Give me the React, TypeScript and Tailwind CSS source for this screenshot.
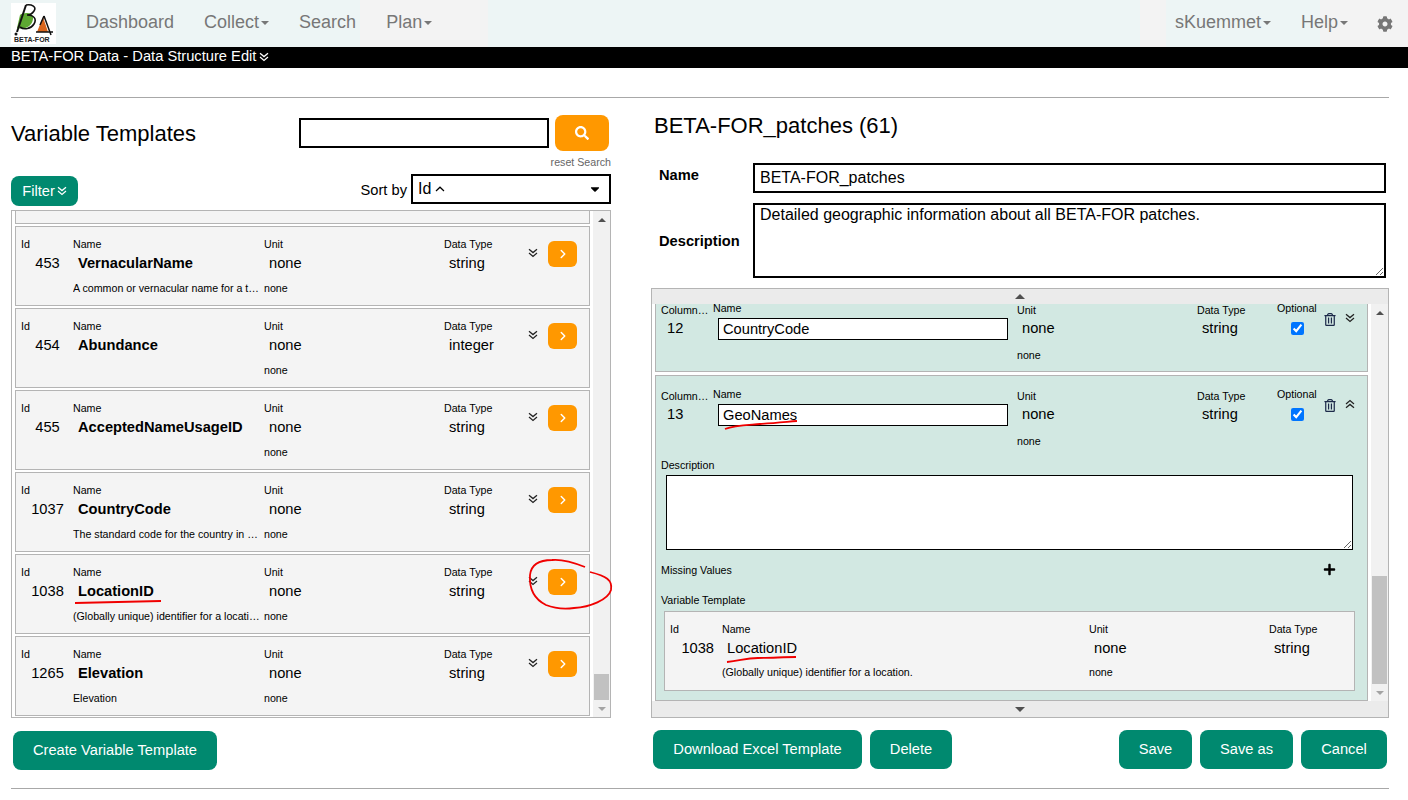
import type { ReactNode } from "react";
import { ChevronRight } from "lucide-react";
import { FaCaretDown, FaCog, FaPlus, FaRegTrashAlt, FaSearch } from "react-icons/fa";

const templates = [
  { id: 453, name: "VernacularName", type: "string", desc: "A common or vernacular name for a taxon." },
  { id: 454, name: "Abundance", type: "integer", desc: "" },
  { id: 455, name: "AcceptedNameUsageID", type: "string", desc: "" },
  { id: 1037, name: "CountryCode", type: "string", desc: "The standard code for the country in which the location is." },
  { id: 1038, name: "LocationID", type: "string", desc: "(Globally unique) identifier for a location." },
  { id: 1265, name: "Elevation", type: "string", desc: "Elevation" },
];

// thin double chevron, the icon font version in the app renders lighter than the FA one
function Chevrons({ up, className = "" }: { up?: boolean; className?: string }) {
  return (
    <svg viewBox="0 0 10 10" className={`h-[10px] w-[10px] ${up ? "rotate-180" : ""} ${className}`} fill="none" stroke="currentColor" strokeWidth="1.25">
      <polyline points="1,1.2 5,4.6 9,1.2" />
      <polyline points="1,5 5,8.4 9,5" />
    </svg>
  );
}

function Caret() {
  return <span className="ml-[2px] inline-block border-x-[4px] border-t-[4px] border-x-transparent border-t-[#777] align-middle" />;
}

function NavLink({ children, caret }: { children: ReactNode; caret?: boolean }) {
  return (
    <a className="flex items-center px-[15px] pb-[2px] text-[18px] text-[#777]">
      {children}
      {caret && <Caret />}
    </a>
  );
}

function Logo() {
  return (
    <div className="h-[41px] w-[45px] bg-white">
      <svg viewBox="0 0 45 41" className="h-full w-full">
        <path d="M9 12 C13 9 23 9 22 16 C21 24 13 27 6 25 Z" fill="#5da832" />
        <path d="M15 2 L6 29" stroke="#111" strokeWidth="2" fill="none" />
        <path d="M15 2 C21 1 26 4 23 8 C21 11 18 12 16 12 C23 12 26 16 23 21 C20 26 13 27 9 24" stroke="#111" strokeWidth="1.6" fill="none" />
        <circle cx="5" cy="31" r="1.5" fill="#111" />
        <path d="M32 14 L26 29 L37 29 Z" fill="#d9651c" />
        <path d="M33 13 L40 32 M25 29 L42 29 M33 13 L29 22" stroke="#111" strokeWidth="1.5" fill="none" />
        <text x="3" y="38.5" fontSize="7" fontWeight="700" fill="#222" fontFamily="Liberation Sans, sans-serif">BETA-FOR</text>
      </svg>
    </div>
  );
}

function GreenButton({ children, className }: { children: ReactNode; className: string }) {
  return (
    <button className={`flex h-[39px] items-center justify-center rounded-[8px] bg-[#00896f] pb-[2px] text-[14.67px] text-white ${className}`}>
      {children}
    </button>
  );
}

function Scrollbar({ thumb }: { thumb: string }) {
  return (
    <div className="flex w-[17px] shrink-0 flex-col bg-[#f1f1f1]">
      <div className="flex h-[17px] items-center justify-center">
        <span className="border-x-[4px] border-b-[4px] border-x-transparent border-b-[#505050]" />
      </div>
      <div className="flex flex-1 flex-col items-center justify-end">
        <div className={`w-[15px] bg-[#c1c1c1] ${thumb}`} />
      </div>
      <div className="flex h-[17px] items-center justify-center">
        <span className="border-x-[4px] border-t-[4px] border-x-transparent border-t-[#a3a3a3]" />
      </div>
    </div>
  );
}

function Label({ children, className = "" }: { children: ReactNode; className?: string }) {
  return <div className={`flex h-[14px] items-center text-[10.67px] whitespace-nowrap ${className}`}>{children}</div>;
}

function TemplateRow({ t }: { t: (typeof templates)[number] }) {
  return (
    <div className="grid h-[80px] shrink-0 grid-cols-[52px_191px_180px_84px_20px_29px] grid-rows-[14px_24px_26px] border border-[#b4b4b4] bg-[#f4f4f4] pt-[10px] pl-[5px] text-black">
      <Label>Id</Label>
      <Label>Name</Label>
      <Label>Unit</Label>
      <Label>Data Type</Label>
      <div className="row-span-2 flex items-center pb-[6px]">
        <Chevrons className="text-[#222]" />
      </div>
      <div className="row-span-2 pt-[4px]">
        <button className="flex h-[26px] w-[29px] items-center justify-center rounded-[6px] bg-[#ff9800] text-white">
          <ChevronRight size={14} strokeWidth={2.5} />
        </button>
      </div>
      <div className="flex items-center justify-center pl-[1px] text-[14.67px] leading-none">{t.id}</div>
      <div className="flex items-center pl-[5px] text-[14.67px] font-bold">{t.name}</div>
      <div className="flex items-center pl-[5px] text-[14.67px]">none</div>
      <div className="flex items-center pl-[5px] text-[14.67px]">{t.type}</div>
      <div />
      <div className="col-start-2 flex items-center pr-[4px]">
        <span className="truncate text-[10.67px]">{t.desc}</span>
      </div>
      <div className="flex items-center text-[10.67px]">none</div>
    </div>
  );
}

function ColumnHeader({ no, name, open }: { no: number; name: string; open?: boolean }) {
  return (
    <div className="grid h-[80px] grid-cols-[52px_304px_180px_80px_47px_21px_20px] grid-rows-[14px_22px_31px] pt-[13px] pl-[5px]">
      <Label className="pr-[3px]">
        <span className="truncate">Column Index</span>
      </Label>
      <Label className="-mt-[2px]">Name</Label>
      <Label>Unit</Label>
      <Label>Data Type</Label>
      <Label className="-mt-[2px]">Optional</Label>
      <div className="row-span-2 pt-[10px]">
        <FaRegTrashAlt className="h-[13px] w-[12px] text-[#1d2a4a]" />
      </div>
      <div className="row-span-2 pt-[10px]">
        <Chevrons up={open} className="text-[#222]" />
      </div>
      <div className="flex items-center pl-[6px] text-[14.67px]">{no}</div>
      <div className="pl-[5px]">
        <input
          readOnly
          value={name}
          className="h-[22px] w-[290px] border border-black bg-white px-[4px] text-[14.67px] text-black outline-none"
        />
      </div>
      <div className="flex items-center pl-[5px] text-[14.67px]">none</div>
      <div className="flex items-center pl-[5px] text-[14.67px]">string</div>
      <div className="flex items-center pl-[14px]">
        <input type="checkbox" readOnly checked className="h-[13px] w-[13px] accent-[#0075ff]" />
      </div>
      <div className="col-start-3 col-end-4 flex items-center text-[10.67px]">none</div>
    </div>
  );
}

export default function App() {
  return (
    <div className="relative w-[1408px] font-['Liberation_Sans',Arial,sans-serif] text-black">
      <nav className="flex h-[47px] items-center bg-[linear-gradient(90deg,#edf5f5_360px,#f3f3f3_360px,#f3f3f3_488px,#edf5f5_488px,#edf5f5_1140px,#f3f3f3_1140px,#f3f3f3_1166px,#edf5f5_1166px,#edf5f5_1320px,#f3f3f3_1320px)] pr-[15px] pl-[11px]">
        <div className="mr-[15px]">
          <Logo />
        </div>
        <NavLink>Dashboard</NavLink>
        <NavLink caret>Collect</NavLink>
        <NavLink>Search</NavLink>
        <NavLink caret>Plan</NavLink>
        <div className="ml-auto flex items-center">
          <NavLink caret>sKuemmet</NavLink>
          <NavLink caret>Help</NavLink>
          <FaCog className="ml-[14px] h-[16px] w-[16px] text-[#777]" />
        </div>
      </nav>
      <div className="flex h-[21px] items-center bg-black pb-[2px] pl-[11px] text-[14.7px] text-white">
        BETA-FOR Data - Data Structure Edit
        <Chevrons className="ml-[3px]" />
      </div>

      <main className="pt-[29px] pr-[19px] pl-[11px]">
        <hr className="border-[#a8a8a8]" />
        <div className="flex gap-[40px]">
          <section className="w-[600px]">
            <div className="mt-[17px] flex h-[36px] items-center pr-[2px]">
              <h2 className="pt-[1px] text-[22px]">Variable Templates</h2>
              <input className="ml-auto h-[30px] w-[250px] border-2 border-black bg-white outline-none" />
              <button className="ml-[6px] flex h-[36px] w-[54px] items-center justify-center rounded-[8px] bg-[#ff9800] text-white">
                <FaSearch className="h-[14px] w-[14px]" />
              </button>
            </div>
            <div className="mt-[4px] flex h-[14px] items-center justify-end text-[10.67px] text-[#666]">reset Search</div>
            <div className="mt-[5px] flex items-start justify-between">
              <button className="mt-[2px] flex h-[30px] w-[67px] items-center justify-center rounded-[8px] bg-[#00896f] text-[14.67px] text-white">
                Filter
                <Chevrons className="ml-[2px]" />
              </button>
              <div className="flex items-center">
                <span className="mr-[4px] pt-[1px] text-[14.67px]">Sort by</span>
                <div className="flex h-[30px] w-[200px] items-center border-2 border-black pr-[7px] pl-[5px] text-[16px]">
                  Id
                  <svg viewBox="0 0 10 6" className="ml-[4px] h-[6px] w-[10px]" fill="none" stroke="currentColor" strokeWidth="1.2">
                    <polyline points="1,5 5,1.2 9,5" />
                  </svg>
                  <FaCaretDown className="ml-auto h-[14px] w-[14px]" />
                </div>
              </div>
            </div>
            <div className="mt-[4px] flex h-[508px] border border-[#b4b4b4]">
              <div className="flex flex-1 flex-col justify-end gap-[2px] overflow-hidden pr-[3px] pb-[1px] pl-[3px]">
                <div className="h-[80px] shrink-0 border border-[#b4b4b4] bg-[#f4f4f4]" />
                {templates.map((t) => (
                  <TemplateRow key={t.id} t={t} />
                ))}
              </div>
              <Scrollbar thumb="h-[26px]" />
            </div>
            <GreenButton className="mt-[13px] ml-[2px] w-[204px]">Create Variable Template</GreenButton>
          </section>

          <section className="w-[738px]">
            <h2 className="mt-[15px] ml-[3px] h-[26px] text-[22px] leading-[26px]">BETA-FOR_patches (61)</h2>
            <div className="mt-[24px] flex">
              <label className="w-[102px] pt-[1px] pl-[8px] text-[14.67px] font-bold">Name</label>
              <input
                readOnly
                value="BETA-FOR_patches"
                className="h-[30px] w-[633px] border-2 border-black px-[5px] text-[16px] outline-none"
              />
            </div>
            <div className="mt-[10px] flex items-center">
              <label className="w-[102px] pl-[8px] text-[14.67px] font-bold">Description</label>
              <textarea
                readOnly
                value="Detailed geographic information about all BETA-FOR patches."
                className="h-[75px] w-[633px] border-2 border-black px-[5px] pt-[1px] text-[16px] leading-[18px] outline-none"
              />
            </div>

            <div className="mt-[10px] flex h-[430px] flex-col border border-[#b4b4b4]">
              <div className="flex h-[15px] shrink-0 items-center justify-center bg-[#ebebeb]">
                <span className="border-x-[5px] border-b-[5px] border-x-transparent border-b-[#505050]" />
              </div>
              <div className="flex min-h-0 flex-1">
                <div className="flex flex-1 flex-col justify-end gap-[3px] overflow-hidden pr-[3px] pl-[3px]">
                  <div className="shrink-0 border border-[#b4b4b4] bg-[#d2e8e2] pb-[1px]">
                    <ColumnHeader no={12} name="CountryCode" />
                  </div>
                  <div className="shrink-0 border border-[#b4b4b4] bg-[#d2e8e2]">
                    <ColumnHeader no={13} name="GeoNames" open />
                    <div className="px-[5px] pb-[9px]">
                      <Label className="mt-[2px]">Description</Label>
                      <textarea readOnly className="mt-[3px] ml-[5px] block h-[75px] w-[687px] border border-black bg-white outline-none" />
                      <div className="mt-[13px] flex h-[14px] items-center justify-between pr-[26px]">
                        <span className="text-[10.67px]">Missing Values</span>
                        <FaPlus className="-mt-[2px] h-[13px] w-[13px]" />
                      </div>
                      <Label className="mt-[16px]">Variable Template</Label>
                      <div className="mt-[4px] ml-[3px] grid h-[80px] w-[691px] grid-cols-[52px_367px_180px_1fr] grid-rows-[14px_24px_24px] border border-[#b4b4b4] bg-[#f4f4f4] pt-[10px] pl-[5px]">
                        <Label>Id</Label>
                        <Label>Name</Label>
                        <Label>Unit</Label>
                        <Label>Data Type</Label>
                        <div className="flex items-center justify-end pr-[8px] text-[14.67px]">1038</div>
                        <div className="flex items-center pl-[5px] text-[14.67px]">LocationID</div>
                        <div className="flex items-center pl-[5px] text-[14.67px]">none</div>
                        <div className="flex items-center pl-[5px] text-[14.67px]">string</div>
                        <div className="col-start-2 flex items-center text-[10.67px]">(Globally unique) identifier for a location.</div>
                        <div className="flex items-center text-[10.67px]">none</div>
                      </div>
                    </div>
                  </div>
                </div>
                <Scrollbar thumb="h-[108px]" />
              </div>
              <div className="flex h-[16px] shrink-0 items-center justify-center bg-[#ebebeb]">
                <span className="border-x-[5px] border-t-[5px] border-x-transparent border-t-[#505050]" />
              </div>
            </div>

            <div className="mt-[12px] flex gap-[8px] pr-[2px] pl-[2px]">
              <GreenButton className="w-[209px]">Download Excel Template</GreenButton>
              <GreenButton className="w-[82px]">Delete</GreenButton>
              <GreenButton className="ml-auto w-[73px]">Save</GreenButton>
              <GreenButton className="w-[93px]">Save as</GreenButton>
              <GreenButton className="w-[86px]">Cancel</GreenButton>
            </div>
          </section>
        </div>
        <hr className="mt-[18px] border-[#a8a8a8]" />
      </main>

      {/* red pen marks someone drew on the screenshot */}
      <svg className="pointer-events-none absolute top-0 left-0 h-[800px] w-[1408px]" viewBox="0 0 1408 800" fill="none" stroke="#f00000" strokeWidth="1.8">
        <path d="M585 567 C575 563 562 559 552 560 C538 560 531 566 530 575 C529 590 536 600 546 605 C556 609 566 609 574 608 C590 607 608 600 611 590 C613 580 606 576 590 572" />
        <path d="M75 603 L118 602 L161 601" />
        <path d="M725 429 C735 425 750 425 760 424 C775 423 785 422 797 421" />
        <path d="M727 662 C740 661 745 658 758 658 C770 658 785 657 796 657" />
      </svg>
    </div>
  );
}
